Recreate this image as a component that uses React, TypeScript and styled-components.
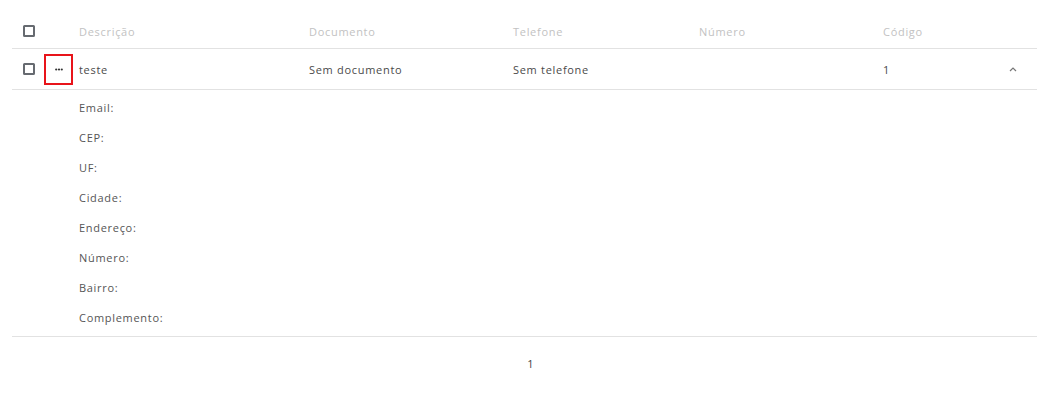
import React, { useState } from "react";
import styled, { createGlobalStyle } from "styled-components";

const GlobalStyle = createGlobalStyle`
  html, body {
    margin: 0;
    padding: 0;
    background: #fff;
    font-family: "Open Sans", "Noto Sans", sans-serif;
  }
  * {
    box-sizing: border-box;
  }
`;

interface Client {
  descricao: string;
  documento: string;
  telefone: string;
  numero: string;
  codigo: string;
}

const clients: Client[] = [
  {
    descricao: "teste",
    documento: "Sem documento",
    telefone: "Sem telefone",
    numero: "",
    codigo: "1",
  },
];

const detailLabels = [
  "Email:",
  "CEP:",
  "UF:",
  "Cidade:",
  "Endereço:",
  "Número:",
  "Bairro:",
  "Complemento:",
];

export default function App() {
  const [open, setOpen] = useState(true);

  return (
    <>
      <GlobalStyle />
      <Page>
        <Table>
          <HeaderRow>
            <CheckCell>
              <Checkbox />
            </CheckCell>
            <span />
            <HeadCell>Descrição</HeadCell>
            <HeadCell>Documento</HeadCell>
            <HeadCell>Telefone</HeadCell>
            <HeadCell>Número</HeadCell>
            <HeadCell>Código</HeadCell>
            <span />
          </HeaderRow>
          {clients.map((client, index) => (
            <React.Fragment key={index}>
              <BodyRow>
                <CheckCell>
                  <Checkbox />
                </CheckCell>
                <ActionButton>
                  <svg width="8" height="3" viewBox="0 0 8 3">
                    <circle cx="1.2" cy="1.5" r="1.1" fill="#333" />
                    <circle cx="4" cy="1.5" r="1.1" fill="#333" />
                    <circle cx="6.8" cy="1.5" r="1.1" fill="#333" />
                  </svg>
                </ActionButton>
                <BodyCell>{client.descricao}</BodyCell>
                <BodyCell>{client.documento}</BodyCell>
                <BodyCell>{client.telefone}</BodyCell>
                <BodyCell>{client.numero}</BodyCell>
                <BodyCell>{client.codigo}</BodyCell>
                <ToggleCell onClick={() => setOpen(!open)}>
                  <svg width="8" height="5" viewBox="0 0 8 5">
                    <polyline
                      points={open ? "1,4 4,1 7,4" : "1,1 4,4 7,1"}
                      fill="none"
                      stroke="#777"
                      strokeWidth="1.2"
                    />
                  </svg>
                </ToggleCell>
              </BodyRow>
              {open && (
                <Details>
                  {detailLabels.map((label) => (
                    <DetailLine key={label}>{label}</DetailLine>
                  ))}
                </Details>
              )}
            </React.Fragment>
          ))}
        </Table>
        <Pagination>
          <PageNumber>1</PageNumber>
        </Pagination>
      </Page>
    </>
  );
}

const Page = styled.div`
  padding: 14px 7px 0 12px;
`;

const Table = styled.div`
  display: flex;
  flex-direction: column;
  width: 1025px;
`;

const rowColumns = `
  display: grid;
  grid-template-columns: 32px 29px 230px 204px 186px 184px 1fr 40px;
  align-items: center;
  border-bottom: 1px solid #e2e2e2;
`;

const HeaderRow = styled.div`
  ${rowColumns}
  height: 35px;
`;

const BodyRow = styled.div`
  ${rowColumns}
  height: 41px;
`;

const CheckCell = styled.div`
  display: flex;
  justify-content: center;
  padding-left: 2px;
`;

const Checkbox = styled.div`
  width: 12px;
  height: 12px;
  border: 2px solid #666a70;
  border-radius: 1.5px;
`;

const ActionButton = styled.div`
  width: 29px;
  height: 31px;
  border: 2px solid #e8141a;
  display: flex;
  align-items: center;
  justify-content: center;
`;

const HeadCell = styled.div`
  padding-left: 6px;
  font-size: 11px;
  color: #c2c2c2;
  letter-spacing: 0.7px;
`;

const BodyCell = styled.div`
  padding-left: 6px;
  font-size: 11px;
  color: #4a4a4a;
  letter-spacing: 0.7px;
`;

const ToggleCell = styled.div`
  display: flex;
  justify-content: flex-start;
  padding-left: 12px;
  cursor: pointer;
`;

const Details = styled.div`
  display: flex;
  flex-direction: column;
  padding: 3px 0 3px 67px;
  border-bottom: 1px solid #e2e2e2;
`;

const DetailLine = styled.div`
  height: 30px;
  line-height: 30px;
  font-size: 11px;
  color: #555;
  letter-spacing: 0.7px;
`;

const Pagination = styled.div`
  display: flex;
  justify-content: center;
  padding: 19px 0 0 12px;
  width: 1025px;
`;

const PageNumber = styled.span`
  font-size: 11px;
  color: #444;
`;
